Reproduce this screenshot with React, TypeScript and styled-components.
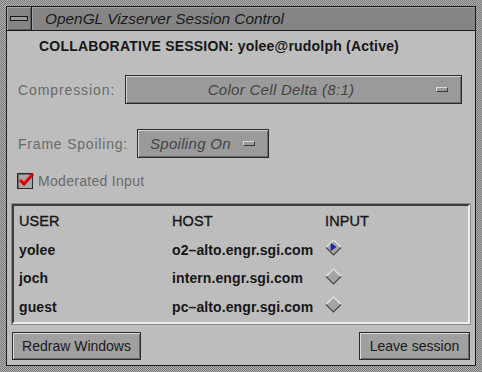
import React from 'react'
import styled, { createGlobalStyle } from 'styled-components'

const GlobalStyle = createGlobalStyle`
  html, body {
    margin: 0;
    padding: 0;
    background: #8f8f8f;
  }
  body {
    font-family: 'Liberation Sans', Arial, sans-serif;
  }
`

const Frame = styled.div`
  width: 482px;
  height: 372px;
  box-sizing: border-box;
  padding: 6px;
  background-color: #999;
  background-image: repeating-conic-gradient(#b0b0b0 0 25%, #7a7a7a 0 50%);
  background-size: 2px 2px;
  display: flex;
  flex-direction: column;
`

const Inner = styled.div`
  flex: 1;
  display: flex;
  flex-direction: column;
  border: 1px solid #1c1c1c;
  background: #bdbdbd;
`

const TitleBar = styled.div`
  height: 23px;
  display: flex;
  align-items: stretch;
  background: #858585;
  border-bottom: 1px solid #1c1c1c;
`

const MenuButton = styled.div`
  width: 24px;
  display: flex;
  align-items: center;
  justify-content: center;
  border-right: 1px solid #1c1c1c;
  box-shadow: inset 1px 1px 0 #a8a8a8, inset -1px -1px 0 #5e5e5e;
`

const MenuBar = styled.div`
  width: 16px;
  height: 3px;
  background: #9a9a9a;
  border: 1px solid #1a1a1a;
`

const Title = styled.div`
  flex: 1;
  display: flex;
  align-items: center;
  padding-left: 13px;
  font-size: 15.4px;
  font-style: italic;
  color: #1a1a1a;
  box-shadow: inset 1px 1px 0 #a0a0a0;
`

const Body = styled.div`
  flex: 1;
  display: flex;
  flex-direction: column;
  padding: 0 4px;
`

const Heading = styled.div`
  padding: 7px 0 0 28px;
  height: 20px;
  font-size: 14px;
  font-weight: bold;
  color: #161616;
  letter-spacing: 0.2px;
`

const OptionRow = styled.div<{ $top: number }>`
  display: flex;
  align-items: center;
  margin-top: ${({ $top }) => $top}px;
  padding-left: 7px;
`

const Label = styled.div<{ $width: number; $spacing: number }>`
  width: ${({ $width }) => $width}px;
  font-size: 14px;
  color: #6a6a6a;
  letter-spacing: ${({ $spacing }) => $spacing}px;
`

const OptionMenu = styled.div<{ $width: number }>`
  width: ${({ $width }) => $width}px;
  height: 29px;
  box-sizing: border-box;
  display: flex;
  align-items: center;
  background: #9a9a9a;
  border: 1px solid #2a2a2a;
  box-shadow: inset 1px 1px 0 #d4d4d4, inset -1px -1px 0 #6a6a6a;
`

const OptionText = styled.div<{ $center: boolean }>`
  flex: 1;
  text-align: ${({ $center }) => ($center ? 'center' : 'left')};
  padding-left: ${({ $center }) => ($center ? 0 : 12)}px;
  font-size: 15px;
  font-style: italic;
  color: #444;
  letter-spacing: 0.3px;
`

const Indicator = styled.div`
  width: 10px;
  height: 3px;
  margin-right: 13px;
  background: #9a9a9a;
  border: 1px solid #3a3a3a;
  border-top-color: #d8d8d8;
  border-left-color: #d8d8d8;
`

const CheckRow = styled.div`
  display: flex;
  align-items: center;
  margin-top: 15px;
  padding-left: 6px;
  gap: 5px;
`

const CheckBox = styled.div`
  width: 14px;
  height: 14px;
  border: 1px solid #2a2a2a;
  background: #a8a8a8;
  box-shadow: inset 1px 1px 0 #6a6a6a;
  position: relative;
`

const CheckMark = styled.svg`
  position: absolute;
  left: 0;
  top: -2px;
`

const TableFrame = styled.div`
  margin: 15px 1px 0 1px;
  height: 120px;
  box-sizing: border-box;
  border: 2px solid;
  border-color: #3c3c3c #eeeeee #eeeeee #3c3c3c;
  outline: 1px solid #8a8a8a;
  display: grid;
  grid-template-columns: 153px 153px 1fr;
  grid-auto-rows: 28.5px;
  padding: 1px 0 0 5px;
  align-items: center;
`

const Cell = styled.div`
  font-size: 14px;
  font-weight: bold;
  color: #161616;
  letter-spacing: 0.1px;
`

const HeaderCell = styled(Cell)`
  font-size: 14.5px;
  font-weight: normal;
  -webkit-text-stroke: 0.35px #161616;
`

const ButtonRow = styled.div`
  display: flex;
  justify-content: space-between;
  margin-top: 8px;
  padding: 0 1px;
`

const PushButton = styled.div<{ $width: number }>`
  width: ${({ $width }) => $width}px;
  height: 28px;
  box-sizing: border-box;
  display: flex;
  align-items: center;
  justify-content: center;
  background: #a0a0a0;
  border: 1px solid #2a2a2a;
  box-shadow: inset 1px 1px 0 #dcdcdc, inset -1px -1px 0 #6a6a6a;
  font-size: 14px;
  color: #1a1a1a;
`

function Diamond({ selected }: { selected: boolean }) {
  return (
    <svg width="17" height="17" viewBox="0 0 17 17">
      <polygon points="8.5,1 16,8.5 8.5,16 1,8.5" fill="#a4a4a4" />
      <polyline points="1,8.5 8.5,1 16,8.5" fill="none" stroke="#e6e6e6" strokeWidth="1.2" />
      <polyline points="1,8.5 8.5,16 16,8.5" fill="none" stroke="#4a4a4a" strokeWidth="1.2" />
      {selected && <polygon points="6,4.5 11,8 6,11.5" fill="#1820d0" stroke="#101060" strokeWidth="0.5" />}
    </svg>
  )
}

const users = [
  { user: 'yolee', host: 'o2\u2013alto.engr.sgi.com', selected: true },
  { user: 'joch', host: 'intern.engr.sgi.com', selected: false },
  { user: 'guest', host: 'pc\u2013alto.engr.sgi.com', selected: false },
]

export default function App() {
  return (
    <>
      <GlobalStyle />
      <Frame>
        <Inner>
          <TitleBar>
            <MenuButton>
              <MenuBar />
            </MenuButton>
            <Title>OpenGL Vizserver Session Control</Title>
          </TitleBar>
          <Body>
            <Heading>COLLABORATIVE SESSION: yolee@rudolph (Active)</Heading>
            <OptionRow $top={17}>
              <Label $width={107} $spacing={0.9}>Compression:</Label>
              <OptionMenu $width={337}>
                <OptionText $center>Color Cell Delta (8:1)</OptionText>
                <Indicator />
              </OptionMenu>
            </OptionRow>
            <OptionRow $top={25}>
              <Label $width={119} $spacing={0.8}>Frame Spoiling:</Label>
              <OptionMenu $width={132}>
                <OptionText $center={false}>Spoiling On</OptionText>
                <Indicator />
              </OptionMenu>
            </OptionRow>
            <CheckRow>
              <CheckBox>
                <CheckMark width="16" height="16" viewBox="0 0 16 16">
                  <path d="M2 8 L6 12 L15 2" fill="none" stroke="#e00000" strokeWidth="3" />
                </CheckMark>
              </CheckBox>
              <Label $width={200} $spacing={0.3}>Moderated Input</Label>
            </CheckRow>
            <TableFrame>
              <HeaderCell>USER</HeaderCell>
              <HeaderCell>HOST</HeaderCell>
              <HeaderCell>INPUT</HeaderCell>
              {users.map((u) => (
                <React.Fragment key={u.user}>
                  <Cell>{u.user}</Cell>
                  <Cell>{u.host}</Cell>
                  <div>
                    <Diamond selected={u.selected} />
                  </div>
                </React.Fragment>
              ))}
            </TableFrame>
            <ButtonRow>
              <PushButton $width={129}>Redraw Windows</PushButton>
              <PushButton $width={111}>Leave session</PushButton>
            </ButtonRow>
          </Body>
        </Inner>
      </Frame>
    </>
  )
}
